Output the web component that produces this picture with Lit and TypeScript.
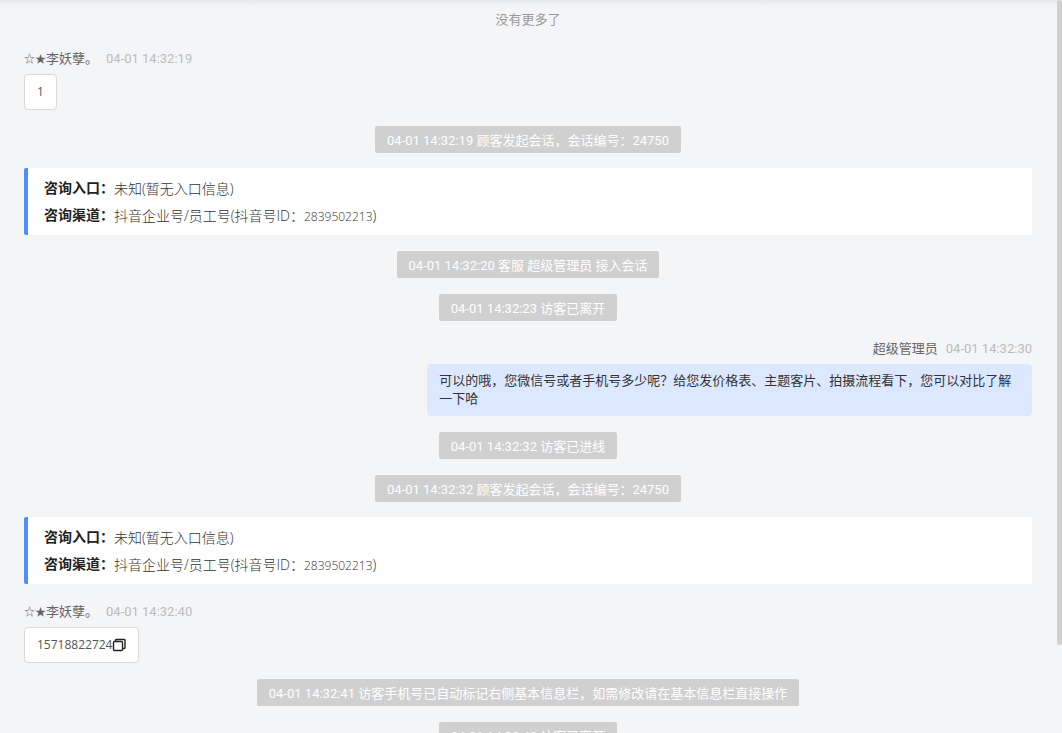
import { LitElement, html, css } from "lit";
import { customElement, property } from "lit/decorators.js";

type Entry =
  | { kind: "system"; time: string; text: string }
  | { kind: "source"; entrance: string; channel: string; id: string }
  | { kind: "visitor"; stars: string; name: string; time: string; text: string; copy?: boolean }
  | { kind: "agent"; name: string; time: string; text: string };

const source: Entry = {
  kind: "source",
  entrance: "未知(暂无入口信息)",
  channel: "抖音企业号/员工号(抖音号ID：",
  id: "2839502213",
};

const entries: Entry[] = [
  { kind: "visitor", stars: "☆★", name: "李妖孽。", time: "04-01 14:32:19", text: "1" },
  { kind: "system", time: "04-01 14:32:19", text: "顾客发起会话，会话编号：24750" },
  source,
  { kind: "system", time: "04-01 14:32:20", text: "客服 超级管理员 接入会话" },
  { kind: "system", time: "04-01 14:32:23", text: "访客已离开" },
  {
    kind: "agent",
    name: "超级管理员",
    time: "04-01 14:32:30",
    text: "可以的哦，您微信号或者手机号多少呢？给您发价格表、主题客片、拍摄流程看下，您可以对比了解一下哈",
  },
  { kind: "system", time: "04-01 14:32:32", text: "访客已进线" },
  { kind: "system", time: "04-01 14:32:32", text: "顾客发起会话，会话编号：24750" },
  source,
  { kind: "visitor", stars: "☆★", name: "李妖孽。", time: "04-01 14:32:40", text: "15718822724", copy: true },
  {
    kind: "system",
    time: "04-01 14:32:41",
    text: "访客手机号已自动标记右侧基本信息栏，如需修改请在基本信息栏直接操作",
  },
  { kind: "system", time: "04-01 14:32:42", text: "访客已离开" },
];

@customElement("chat-entry")
export class ChatEntry extends LitElement {
  @property({ attribute: false }) entry!: Entry;

  static styles = css`
    :host {
      display: block;
    }
    .system {
      display: flex;
      justify-content: center;
    }
    .pill {
      padding: 3px 12px 0;
      line-height: 24px;
      border-radius: 2px;
      background: #d0d0d0;
      color: #fff;
    }
    .source {
      margin: -1px 0 0;
      padding: 7px 16px 6px;
      border-left: 4px solid #4e8fff;
      border-radius: 2px;
      background: #fff;
      font-size: 14px;
      line-height: 27px;
      color: #222;
    }
    .row {
      display: flex;
      height: 27px;
    }
    .source dt {
      font-weight: 700;
    }
    .source dd {
      margin: 0;
      font-family: "Open Sans", "Noto Sans CJK SC", sans-serif;
      font-weight: 300;
      color: #333;
    }
    .id,
    .number {
      font-family: "Open Sans", "Noto Sans CJK SC", sans-serif;
      font-size: 12px;
      line-height: 1;
    }
    .message {
      display: flex;
      flex-direction: column;
      align-items: flex-start;
      gap: 5px;
    }
    .message.agent {
      align-items: flex-end;
    }
    .meta {
      display: flex;
      gap: 8px;
      padding-top: 2px;
      line-height: 20px;
      color: #666;
    }
    .stars {
      font-size: 11px;
      line-height: 1;
    }
    .time {
      color: #bbb;
    }
    .bubble {
      box-sizing: border-box;
      display: flex;
      align-items: center;
      min-height: 36px;
      max-width: 60%;
      padding: 8px 12px;
      border: 1px solid #d9d9d9;
      border-radius: 4px;
      background: #fff;
      line-height: 18px;
      color: #555;
    }
    .agent .bubble {
      width: 60%;
      border: 0;
      background: #dce8ff;
      color: #333;
    }
    .copy {
      display: flex;
      padding: 0;
      border: 0;
      background: none;
      color: #222;
    }
  `;

  render() {
    const e = this.entry;
    if (e.kind === "system") {
      return html`<div class="system"><span class="pill">${e.time} ${e.text}</span></div>`;
    }
    if (e.kind === "source") {
      return html`<dl class="source">
        <div class="row"><dt>咨询入口：</dt><dd>${e.entrance}</dd></div>
        <div class="row"><dt>咨询渠道：</dt><dd>${e.channel}<span class="id">${e.id}</span>)</dd></div>
      </dl>`;
    }
    if (e.kind === "agent") {
      return html`<article class="message agent">
        <div class="meta"><span>${e.name}</span><span class="time">${e.time}</span></div>
        <div class="bubble">${e.text}</div>
      </article>`;
    }
    return html`<article class="message">
      <div class="meta">
        <span><span class="stars">${e.stars}</span>${e.name}</span><span class="time">${e.time}</span>
      </div>
      <div class="bubble">
        <span class="number">${e.text}</span>${e.copy
          ? html`<button class="copy" type="button" aria-label="复制">
              <svg width="14" height="14" viewBox="0 0 14 14" fill="none" stroke="currentColor" stroke-width="1.4">
                <rect x="1.5" y="3.5" width="9" height="9" rx="1" />
                <path d="M3.5 3.5V2.2q0-.7.7-.7h8.1q.7 0 .7.7v7.6q0 .7-.7.7H10.5" />
              </svg>
            </button>`
          : ""}
      </div>
    </article>`;
  }
}

@customElement("app-root")
export class AppRoot extends LitElement {
  static styles = css`
    :host {
      position: relative;
      display: block;
      height: 100vh;
      overflow: hidden;
      background: #f4f5f7;
      font-family: Roboto, "Noto Sans CJK SC", sans-serif;
      font-size: 13px;
    }
    .shade {
      position: absolute;
      inset: 0 0 auto;
      height: 6px;
      background: linear-gradient(#e6e7e9, #f4f5f7);
    }
    .thumb {
      position: absolute;
      top: 0;
      right: 0;
      width: 5px;
      height: 88%;
      border-radius: 3px;
      background: #d0d0d0;
    }
    .log {
      position: relative;
      display: flex;
      flex-direction: column;
      gap: 16px;
      padding: 9px 30px 16px 24px;
    }
    .end {
      margin: 0;
      line-height: 22px;
      text-align: center;
      color: #999;
    }
  `;

  render() {
    return html`
      <div class="shade"></div>
      <main class="log">
        <p class="end">没有更多了</p>
        ${entries.map((entry) => html`<chat-entry .entry=${entry}></chat-entry>`)}
      </main>
      <div class="thumb"></div>
    `;
  }
}
